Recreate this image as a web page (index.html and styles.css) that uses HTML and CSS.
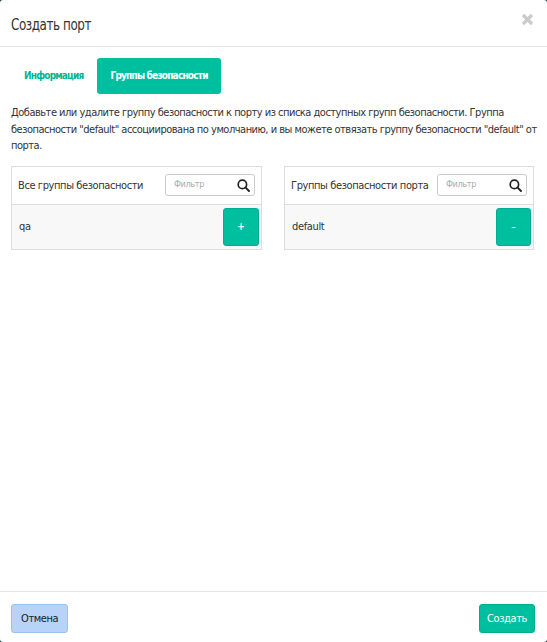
FILE: index.html
```html
<!DOCTYPE html>
<html lang="ru">
<head>
    <meta charset="UTF-8">
    <title>Создать порт</title>
    <link rel="stylesheet" href="styles.css">
</head>
<body>
    <div class="modal">
        <div class="modal-header">
            <h4 class="modal-title">Создать порт</h4>
            <svg class="close" width="13" height="13" viewBox="0 0 13 13"><path d="M2 2 L11 11 M11 2 L2 11" stroke="#cbcbcb" stroke-width="3.2"/></svg>
        </div>
        <div class="modal-body">
            <ul class="tabs">
                <li class="tab">Информация</li>
                <li class="tab active">Группы безопасности</li>
            </ul>
            <p class="help">Добавьте или удалите группу безопасности к порту из списка доступных групп безопасности. Группа безопасности "default" ассоциирована по умолчанию, и вы можете отвязать группу безопасности "default" от порта.</p>
            <div class="lists">
                <div class="panel">
                    <div class="panel-head">
                        <span class="panel-title">Все группы безопасности</span>
                        <div class="filter">
                            <span class="placeholder">Фильтр</span>
                            <svg width="13" height="13" viewBox="0 0 13 13"><circle cx="5.4" cy="5.4" r="4.2" fill="none" stroke="#222" stroke-width="1.7"/><path d="M8.4 8.4 L12 12" stroke="#222" stroke-width="1.9" stroke-linecap="round"/></svg>
                        </div>
                    </div>
                    <div class="panel-row">
                        <span>qa</span>
                        <button class="btn-item">+</button>
                    </div>
                </div>
                <div class="panel">
                    <div class="panel-head">
                        <span class="panel-title">Группы безопасности порта</span>
                        <div class="filter">
                            <span class="placeholder">Фильтр</span>
                            <svg width="13" height="13" viewBox="0 0 13 13"><circle cx="5.4" cy="5.4" r="4.2" fill="none" stroke="#222" stroke-width="1.7"/><path d="M8.4 8.4 L12 12" stroke="#222" stroke-width="1.9" stroke-linecap="round"/></svg>
                        </div>
                    </div>
                    <div class="panel-row">
                        <span>default</span>
                        <button class="btn-item minus">&ndash;</button>
                    </div>
                </div>
            </div>
        </div>
        <div class="modal-footer">
            <button class="btn btn-cancel">Отмена</button>
            <button class="btn btn-primary">Создать</button>
        </div>
    </div>
</body>
</html>
```
FILE: styles.css
```css
* {
    box-sizing: border-box;
}
html, body {
    margin: 0;
    padding: 0;
    height: 100%;
    background-color: #1e3d3a;
}
body {
    font-family: "DejaVu Sans Condensed", "DejaVu Sans", sans-serif;
    color: #333;
    font-size: 11px;
    letter-spacing: -0.35px;
}
.modal {
    background: white;
    height: 642px;
    border-radius: 3px;
    display: flex;
    flex-direction: column;
}
.modal-header {
    height: 47px;
    border-bottom: 1px solid #e5e5e5;
    display: flex;
    align-items: center;
    justify-content: space-between;
    padding: 2px 13px 0 11px;
}
.modal-title {
    margin: 0;
    font-size: 16px;
    letter-spacing: -0.5px;
    font-weight: normal;
    color: #333;
    transform: scaleX(0.83);
    transform-origin: left center;
}
.close {
    margin-top: -10px;
}
.modal-body {
    flex: 1;
    padding: 11px 10px 0 11px;
}
.tabs {
    list-style: none;
    margin: 0;
    padding: 0 0 0 3px;
    display: flex;
    gap: 4px;
}
.tab {
    height: 36px;
    line-height: 36px;
    padding: 0 10px;
    border-radius: 3px;
    color: #00b592;
    font-weight: bold;
    font-size: 10px;
    letter-spacing: -0.8px;
}
.tab.active {
    background-color: #00bf9f;
    color: white;
    padding: 0 13px;
}
.help {
    margin: 11px 0 0;
    line-height: 16.5px;
    letter-spacing: -0.5px;
    color: #333;
}
.lists {
    display: grid;
    grid-template-columns: 251px 250px;
    gap: 22px;
    margin-top: 11px;
}
.panel {
    border: 1px solid #ddd;
}
.panel-head {
    height: 38px;
    border-bottom: 1px solid #ddd;
    display: flex;
    align-items: center;
    justify-content: space-between;
    padding: 0 6px;
}
.panel-title {
    letter-spacing: -0.4px;
    color: #333;
}
.filter {
    width: 90px;
    height: 22px;
    border: 1px solid #ccc;
    border-radius: 3px;
    display: flex;
    align-items: center;
    justify-content: space-between;
    padding: 0 4px 0 8px;
}
.placeholder {
    color: #aaa;
    font-size: 9px;
    margin-top: -3px;
}
.panel-row {
    height: 44px;
    background: #f8f8f8;
    display: flex;
    align-items: center;
    justify-content: space-between;
    padding: 0 2px 0 7px;
}
.btn-item {
    width: 36px;
    height: 38px;
    border: 1px solid #00ad8f;
    border-radius: 3px;
    background-color: #00bf9f;
    color: white;
    font-weight: bold;
    font-size: 10px;
    font-family: inherit;
    padding: 0;
}
.btn-item.minus {
    width: 35px;
    font-weight: normal;
}
.modal-footer {
    height: 51px;
    border-top: 1px solid #e5e5e5;
    display: flex;
    align-items: flex-start;
    justify-content: space-between;
    padding: 12px 12px 0 11px;
}
.btn {
    height: 29px;
    border-radius: 3px;
    font-family: inherit;
    font-size: 11px;
    letter-spacing: -0.4px;
    padding: 0 9px;
}
.btn-cancel {
    background-color: #b7d3f7;
    border: 1px solid #9ec2f0;
    color: #222;
}
.btn-primary {
    background-color: #00bf9f;
    border: 1px solid #00ad8f;
    color: white;
    padding: 0 7px;
}
```
